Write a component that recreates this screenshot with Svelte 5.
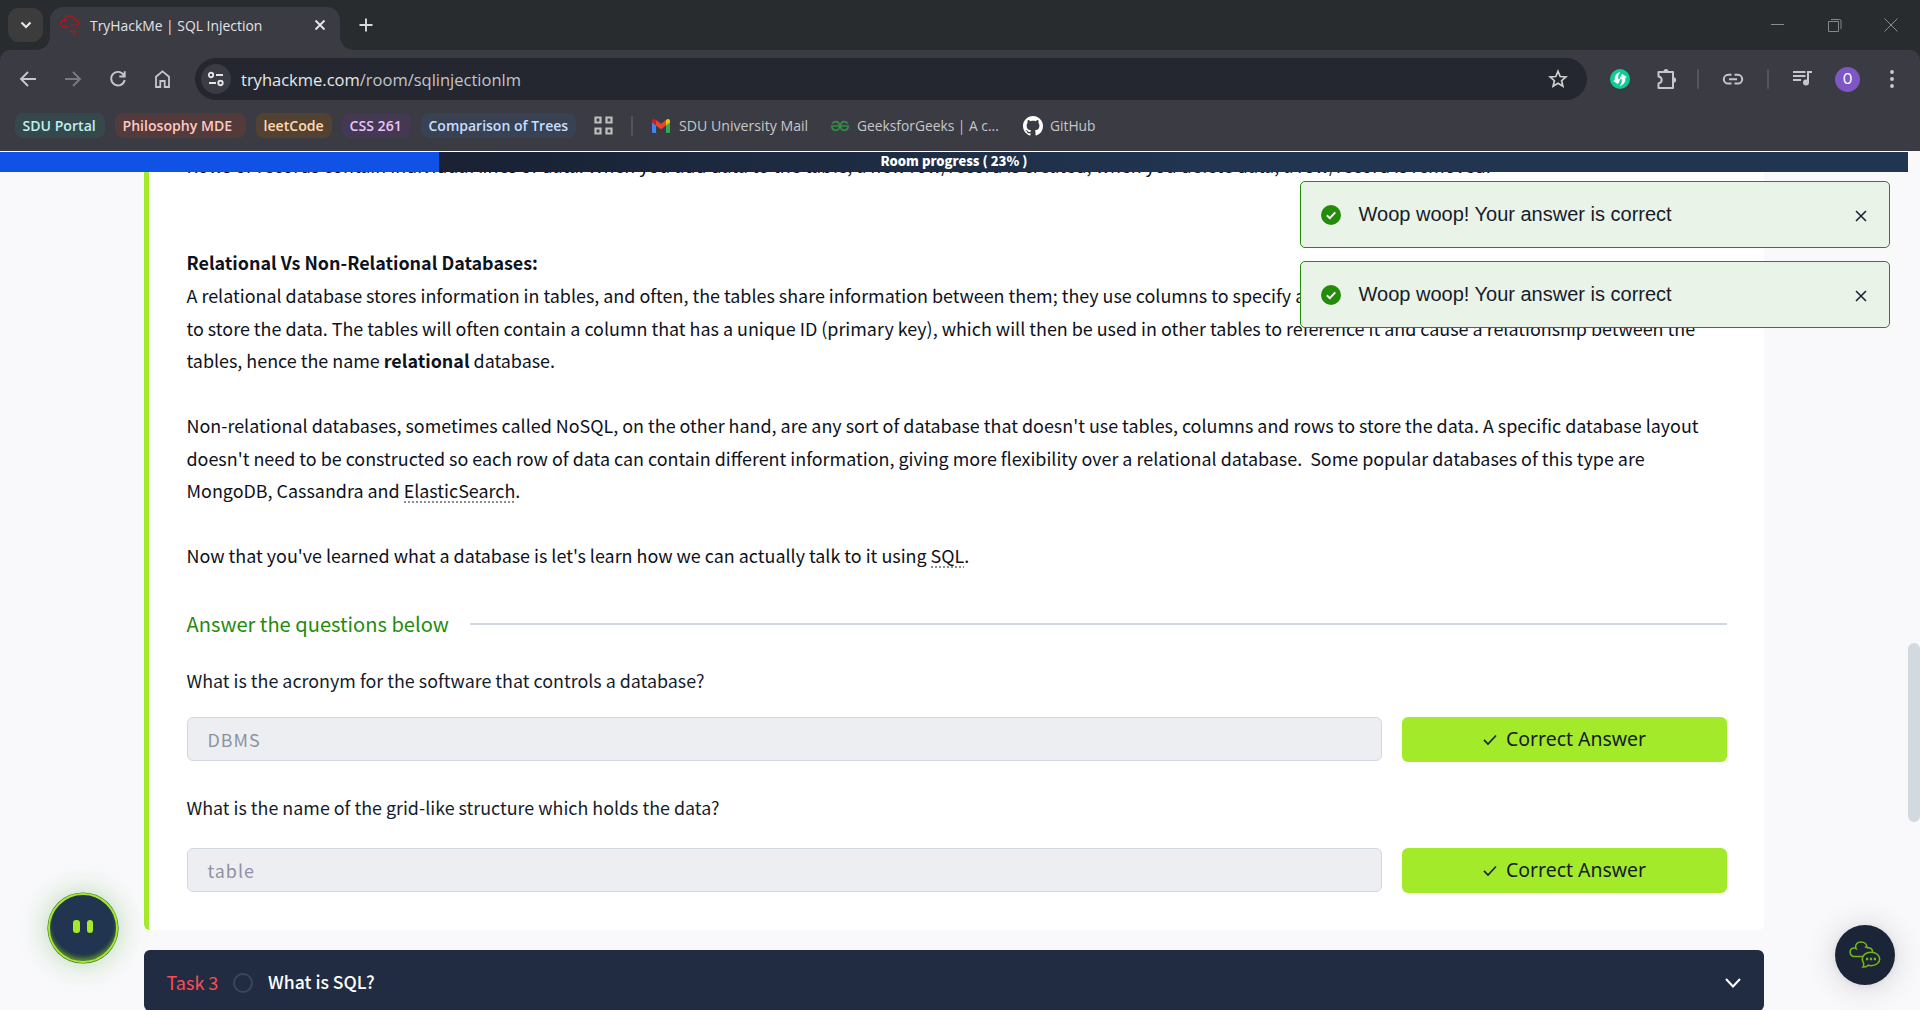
<script>
  const groups = [
    { name: 'SDU Portal', tone: 'teal' },
    { name: 'Philosophy MDE', tone: 'red' },
    { name: 'leetCode', tone: 'orange' },
    { name: 'CSS 261', tone: 'purple' },
    { name: 'Comparison of Trees', tone: 'blue' },
  ];
  const toasts = ['Woop woop! Your answer is correct', 'Woop woop! Your answer is correct'];
  const questions = [
    { text: 'What is the acronym for the software that controls a database?', answer: 'DBMS' },
    { text: 'What is the name of the grid-like structure which holds the data?', answer: 'table' },
  ];
  const progress = 23;
</script>

<div class="window">
  <header class="browser">
    <div class="tabstrip">
      <button class="tab-search" aria-label="Search tabs">
        <svg width="12" height="8" viewBox="0 0 12 8"><path d="M1.5 1.5 6 6l4.500-4.500" fill="none" stroke="#e6e6e6" stroke-width="2.200" /></svg>
      </button>
      <div class="tab">
        <svg class="favicon" width="20" height="20" viewBox="0 0 20 20">
          <path d="M9 12H4.300C2 12 .800 10.400.800 8.600c0-2 1.600-3.500 3.700-3.400C5 2.700 7 .900 9.600.900c2.500 0 4.500 1.600 5 4 2.300 0 4.200 1.500 4.300 3.800M4.500 5.200c1 0 1.700.200 2.400.800" fill="none" stroke="#b3161b" stroke-width="1.400" />
          <path d="M11 9.800h3M15.500 9.800H19M10 16.500h6M13 19h3" stroke="#a31d23" stroke-width="1.300" />
          <path d="M11 12.800h2M14 12.800h4M12 14.600h5M17.500 17.500h2" stroke="#6d2a31" stroke-width="1.300" />
        </svg>
        <span class="tab-title">TryHackMe | SQL Injection</span>
        <svg class="tab-close" width="12" height="12" viewBox="0 0 12 12"><path d="m1.500 1.500 9 9m0-9-9 9" stroke="#e6e6e6" stroke-width="1.900" /></svg>
      </div>
      <svg class="new-tab" width="14" height="14" viewBox="0 0 14 14"><path d="M7 .500v13M.500 7h13" stroke="#dadada" stroke-width="1.900" /></svg>
      <div class="controls">
        <svg width="14" height="14" viewBox="0 0 14 14"><path d="M0 6.500h13" stroke="#8a8c8e" /></svg>
        <svg width="14" height="14" viewBox="0 0 14 14"><path d="M.500 3.500h10v10H.500zM3 1.500h8.500a1.500 1.500 0 0 1 1.500 1.500V11" fill="none" stroke="#858789" /></svg>
        <svg width="14" height="14" viewBox="0 0 14 14"><path d="m.500 .500 13 13m0-13-13 13" stroke="#8a8c8e" /></svg>
      </div>
    </div>

    <div class="chrome">
      <div class="toolbar">
        <nav class="nav">
          <svg viewBox="0 0 20 20"><path d="M18 10H3.500M10 3 3 10l7 7" fill="none" stroke="#c4c7cf" stroke-width="1.900" /></svg>
          <svg viewBox="0 0 20 20"><path d="M2 10h14.500M10 3l7 7-7 7" fill="none" stroke="#787a81" stroke-width="1.900" /></svg>
          <svg viewBox="0 0 20 20"><path d="M15.900 6.200A6.800 6.800 0 1 0 16.700 11M16.700 2.300v5.200h-5.400" fill="none" stroke="#c4c7cf" stroke-width="1.900" /></svg>
          <svg viewBox="0 0 20 20"><path d="M3 18V7.700L9.500 2.300 16 7.700V18h-4.300v-6H7.300v6z" fill="none" stroke="#c4c7cf" stroke-width="1.800" /></svg>
        </nav>
        <div class="omnibox">
          <span class="site-info">
            <svg width="18" height="16" viewBox="0 0 18 16"><g fill="none" stroke="#e3e3e6" stroke-width="1.900"><circle cx="4" cy="4" r="2.200" /><path d="M9 4h7M2 12h7" /><circle cx="13.500" cy="12" r="2.200" /></g></svg>
          </span>
          <span class="url">tryhackme.com<em>/room/sqlinjectionlm</em></span>
          <svg class="star" width="20" height="20" viewBox="0 0 20 20"><path d="m10 2.300 2.200 5.200 5.700.500-4.300 3.700 1.300 5.500-4.900-2.900-4.900 2.900 1.300-5.500L2.100 8l5.700-.500z" fill="none" stroke="#cfcfd2" stroke-width="1.700" /></svg>
        </div>
        <svg class="ext" width="20" height="20" viewBox="0 0 20 20"><circle cx="10" cy="10" r="10" fill="#0fcb95" /><path d="M9.800 3.600C6.300 4.300 4.200 8 5.300 11.200L3.700 12l4.200 2.700L10 10.200l-1.900.300C7.300 8 8 5.300 9.800 3.600zM10.200 16.400c3.500-.700 5.600-4.400 4.500-7.600l1.600-.800-4.200-2.700L10 9.800l1.900-.300c.800 2.500.100 5.200-1.700 6.900z" fill="#fff" stroke="#fff" stroke-width=".7" /></svg>
        <svg class="puzzle" width="24" height="24" viewBox="0 0 24 24"><path d="M3.500 5H18v16H3.500v-4.600c4.200-.700 4.200-6.100 0-6.800z" fill="none" stroke="#c4c7cf" stroke-width="2" stroke-linejoin="round" /><path d="M8.500 4.500a2.500 2.500 0 0 1 5 0zM18.500 10.300a2.600 2.600 0 0 1 0 5.200z" fill="#c4c7cf" /></svg>
        <i class="bar bar-a"></i>
        <svg class="link" width="24" height="24" viewBox="0 0 24 24"><path d="M10.500 7.800H7.200a4.400 4.400 0 0 0 0 8.800h3.300M13.500 7.800h3.300a4.400 4.400 0 0 1 0 8.800h-3.300M8 12.200h8" fill="none" stroke="#c4c7cf" stroke-width="2" /></svg>
        <i class="bar bar-b"></i>
        <svg class="music" width="24" height="24" viewBox="0 0 24 24"><path d="M2 5h12.500M2 9h12.500M2 13h8" stroke="#c4c7cf" stroke-width="1.900" /><path d="M17 15.500V5h4" fill="none" stroke="#c4c7cf" stroke-width="2" /><circle cx="15" cy="15.500" r="3" fill="#c4c7cf" /></svg>
        <span class="avatar">O</span>
        <svg class="dots" width="6" height="20" viewBox="0 0 6 20" fill="#c9ccd3"><circle cx="3" cy="3" r="1.900" /><circle cx="3" cy="10" r="1.900" /><circle cx="3" cy="17" r="1.900" /></svg>
      </div>

      <div class="bookmarks">
        {#each groups as g}
          <span class="chip {g.tone}">{g.name}</span>
        {/each}
        <svg class="apps" width="19" height="19" viewBox="0 0 19 19"><path d="M1.500 1.500h5v5h-5zM12.500 1.500h5v5h-5zM1.500 12.500h5v5h-5zM12.500 12.500h5v5h-5z" fill="none" stroke="#c0bfbd" stroke-width="2.200" /></svg>
        <i class="bar bar-c"></i>
        <span class="mark mail">
          <svg width="18" height="14" viewBox="0 0 18 14"><path d="M0 2.500 4 5.500V14H1.300A1.300 1.300 0 0 1 0 12.700z" fill="#4285f4" /><path d="M18 2.500 14 5.500V14h2.700a1.300 1.300 0 0 0 1.300-1.300z" fill="#34a853" /><path d="M4 1 9 4.800 14 1v5.500l-5 3.800-5-3.800z" fill="#ea4335" /><path d="M0 3V2C0 .200 1.800-.600 3.300.400L4 1v5.500L0 3.500z" fill="#c5221f" /><path d="M18 3V2c0-1.800-1.800-2.600-3.300-1.600L14 1v5.500l4-3z" fill="#fbbc04" /></svg>
          SDU University Mail
        </span>
        <span class="mark geeks">
          <svg width="18" height="12" viewBox="0 0 18 12"><path d="M1.300 3.600C2.200 2.200 3.500 1.700 4.700 1.700c2.200 0 3.700 1.800 3.700 4.300s-1.500 4.300-3.700 4.300C2.500 10.300.900 8.800.900 6.300M0 6h8.300M16.700 3.600c-.900-1.400-2.200-1.900-3.400-1.900C11.100 1.700 9.600 3.500 9.600 6s1.500 4.300 3.700 4.300c2.200 0 3.800-1.500 3.800-4M18 6H9.700" fill="none" stroke="#2f8d46" stroke-width="1.700" /></svg>
          GeeksforGeeks | A c...
        </span>
        <span class="mark">
          <svg width="20" height="20" viewBox="0 0 16 16"><path fill="#fff" d="M8 0C3.580 0 0 3.580 0 8c0 3.540 2.290 6.530 5.470 7.590.4.070.55-.17.55-.38 0-.19-.01-.82-.01-1.490-2.010.37-2.530-.49-2.690-.94-.09-.23-.48-.94-.82-1.130-.28-.15-.68-.52-.01-.53.63-.01 1.080.58 1.230.82.72 1.210 1.870.87 2.330.66.07-.52.28-.87.51-1.070-1.780-.2-3.640-.89-3.640-3.950 0-.87.31-1.590.82-2.150-.08-.2-.36-1.020.08-2.120 0 0 .67-.21 2.200.82.64-.18 1.320-.27 2-.27s1.360.09 2 .27c1.530-1.040 2.200-.82 2.200-.82.44 1.100.16 1.920.08 2.120.51.56.82 1.270.82 2.150 0 3.070-1.870 3.750-3.650 3.950.29.25.54.73.54 1.480 0 1.070-.01 1.930-.01 2.200 0 .21.15.46.55.38A8.010 8.010 0 0 0 16 8c0-4.420-3.580-8-8-8z" /></svg>
          GitHub
        </span>
      </div>
    </div>
  </header>

  <main class="page">
    <section class="card">
      <div class="prose">
        <p>Rows or records contain individual lines of data. When you add data to the table, a new row/record is created, when you delete data, a row/record is removed.</p>
        <p class="section">
          <b>Relational Vs Non-Relational Databases:</b><br />
          A relational database stores information in tables, and often, the tables share information between them; they use columns to specify and define the data being stored and rows<br />
          to store the data. The tables will often contain a column that has a unique ID (primary key), which will then be used in other tables to reference it and cause a relationship between the<br />
          tables, hence the name <b>relational</b> database.
        </p>
        <p>
          Non-relational databases, sometimes called NoSQL, on the other hand, are any sort of database that doesn't use tables, columns and rows to store the data. A specific database layout<br />
          doesn't need to be constructed so each row of data can contain different information, giving more flexibility over a relational database.&nbsp; Some popular databases of this type are<br />
          MongoDB, Cassandra and <span class="term">ElasticSearch</span>.
        </p>
        <p>Now that you've learned what a database is let's learn how we can actually talk to it using <span class="term">SQL</span>.</p>
      </div>

      <h2>Answer the questions below</h2>

      {#each questions as q}
        <div class="question">
          <p>{q.text}</p>
          <div class="answer">
            <div class="field">{q.answer}</div>
            <button class="correct">
              <svg width="14" height="12" viewBox="0 0 14 12"><path d="m1 5.800 4 4.200 8-8.500" fill="none" stroke="#1c2538" stroke-width="1.700" /></svg>
              Correct Answer
            </button>
          </div>
        </div>
      {/each}
    </section>

    <section class="task">
      <span class="task-no">Task 3</span>
      <i class="ring"></i>
      <span class="task-name">What is SQL?</span>
      <svg class="chevron" width="16" height="10" viewBox="0 0 16 10"><path d="m1 1 7 7.500L15 1" fill="none" stroke="#fff" stroke-width="2" /></svg>
    </section>

    <div class="progress">
      <div class="fill" style="width: {progress}%"></div>
      <span>Room progress ( {progress}% )</span>
    </div>

    <div class="toasts">
      {#each toasts as t}
        <div class="toast">
          <svg width="20" height="20" viewBox="0 0 20 20"><circle cx="10" cy="10" r="10" fill="#248b0c" /><path d="m5.800 10.300 3 2.800 5.500-5.800" fill="none" stroke="#fff" stroke-width="1.900" /></svg>
          <span>{t}</span>
          <svg class="dismiss" width="12" height="12" viewBox="0 0 12 12"><path d="m1 1 10 10m0-10L1 11" stroke="#1c2538" stroke-width="1.600" /></svg>
        </div>
      {/each}
    </div>

    <div class="robot"><i></i><i></i></div>

    <div class="chat">
      <svg width="32" height="28" viewBox="0 0 32 28" fill="none" stroke="#74b816" stroke-width="1.500">
        <path d="M13.500 15.500H5.500a4.300 4.300 0 0 1-1-8.500c.800-.200 1.800 0 2.600.500C5.500 3.500 8.500 1 12 1s6 2.300 6 5.500c-.500-.400-1.500-.500-2.200-.100M18 6.800c3-.600 5.300 1 5.700 4" />
        <path d="M14 26c1-1 1-2.500.500-4a6.700 6.700 0 0 1-1.200-4c0-4 3.800-6.700 8.700-6.700s8.700 2.900 8.700 6.700-3.800 6.700-8.700 6.700c-1 0-2-.100-2.800-.400-1.600 1.200-3 1.800-5.200 1.700z" />
        <path d="M17 18h2.200M20.900 18h2.200M24.800 18H27" stroke-width="2.400" />
      </svg>
    </div>

    <i class="scrollbar"></i>
  </main>
</div>

<style>
  :global(body) { margin: 0; overflow: hidden; }
  .window { width: 1920px; height: 1010px; overflow: hidden; display: flex; flex-direction: column; background: #f9f9fb; font-family: 'Open Sans', 'Noto Sans', sans-serif; }
  svg { flex: none; display: block; }
  button { border: 0; padding: 0; font: inherit; }
  p, h2 { margin: 0; }

  .browser { height: 151px; flex: none; background: #292c2f; }
  .tabstrip { height: 50px; display: flex; align-items: center; padding-left: 8px; box-sizing: border-box; }
  .tab-search { width: 35px; height: 34px; border-radius: 11px; background: #3d3c3d; display: flex; align-items: center; justify-content: center; }
  .tab { position: relative; align-self: flex-end; width: 290px; height: 43px; margin-left: 7px; box-sizing: border-box; border-radius: 13px 13px 0 0; background: #3a3b43; display: flex; align-items: center; padding: 0 14px 7px 10px; }
  .tab::before, .tab::after { content: ''; position: absolute; bottom: 0; width: 13px; height: 13px; }
  .tab::before { left: -13px; background: radial-gradient(circle at 0 0, transparent 12.5px, #3a3b43 13px); }
  .tab::after { right: -13px; background: radial-gradient(circle at 100% 0, transparent 12.5px, #3a3b43 13px); }
  .tab-title { flex: 1; margin-left: 10px; font-size: 13.9px; color: #e3e3e6; }
  .new-tab { margin-left: 19px; }
  .controls { margin-left: auto; display: flex; gap: 42.500px; padding-right: 22px; }

  .chrome { height: 101px; background: #3a3b43; border-radius: 10px 10px 0 0; }
  .toolbar { height: 58px; display: flex; align-items: center; }
  .nav { display: flex; gap: 25px; padding-left: 17.5px; width: 177.5px; }
  .nav svg { width: 20px; height: 20px; }
  .omnibox { width: 1392px; height: 42px; box-sizing: border-box; border-radius: 21px; background: #24272f; display: flex; align-items: center; padding: 0 19.500px 0 6px; }
  .site-info { width: 30px; height: 30px; border-radius: 50%; background: #3a3b43; display: flex; align-items: center; justify-content: center; }
  .url { flex: 1; margin-left: 10px; font-size: 16.5px; color: #e8e8ea; }
  .url em { font-style: normal; color: #c3c5ca; }
  .ext { margin-left: 23px; }
  .puzzle { margin-left: 24.500px; }
  .bar { flex: none; width: 2px; height: 20px; background: #53545d; border-radius: 1px; }
  .bar-a { margin-left: 18.500px; }
  .link { margin-left: 21.500px; }
  .bar-b { margin-left: 22px; }
  .music { margin-left: 22.500px; }
  .avatar { width: 25px; height: 25px; margin-left: 20px; border-radius: 50%; background: #7e57c2; color: #fff; font: 14px/25px Roboto, sans-serif; text-align: center; }
  .dots { margin-left: 29px; }

  .bookmarks { height: 35px; display: flex; align-items: center; padding-left: 15px; }
  .chip { flex: none; height: 25px; margin-right: 10px; padding-left: 7.500px; box-sizing: border-box; border-radius: 8px; font-size: 14.1px; line-height: 25px; font-weight: 600; white-space: nowrap; }
  .teal { width: 90px; background: #35494c; color: #bdf1ee; }
  .red { width: 131px; background: #533a3b; color: #ffc9c3; }
  .orange { width: 76px; background: #534232; color: #ffd9b0; }
  .purple { width: 69px; background: #453853; color: #e6c5ff; }
  .blue { width: 155px; background: #384253; color: #c9deff; font-size: 14px; }
  .apps { margin-left: 8px; }
  .bar-c { margin-left: 18px; }
  .mark { display: flex; align-items: center; gap: 7px; font-size: 13.8px; color: #c7c7c9; white-space: nowrap; }
  .mark.mail { width: 179px; margin-left: 19px; gap: 9px; font-size: 14.15px; }
  .mark.geeks { width: 192px; gap: 8px; }

  .page { position: relative; flex: 1; padding: 1px 156px 0 144px; overflow: hidden; background: #f9f9fb; font-family: 'Noto Sans CJK SC', 'Noto Sans', sans-serif; color: #151c2b; }
  .card { height: 778px; box-sizing: border-box; padding: 0 37px 0 37.500px; border-left: 5px solid #a3ea2a; border-radius: 0 0 6px 6px; background: #fff; overflow: hidden; }
  .prose { margin-top: -3.300px; font-size: 17.91px; line-height: 32.56px; white-space: nowrap; color: #0e121c; }
  .prose p { margin-bottom: 32.56px; }
  .prose p.section { margin-top: 65.12px; }
  .prose p:last-child { margin-bottom: 0; }
  .term { background: repeating-linear-gradient(90deg, #8b8e95 0 2px, transparent 2px 4px) 0 100% / 100% 2px no-repeat; padding-bottom: 0; }
  h2 { display: flex; align-items: center; height: 32px; margin-top: 36px; font-size: 20.1px; line-height: 32px; font-weight: 400; color: #248b0c; white-space: nowrap; }
  h2::after { content: ''; flex: 1; height: 2px; margin: 0 0 0 21px; background: #d2d8df; }
  .question { margin-top: 29px; font-size: 17.89px; }
  h2 + .question { margin-top: 24.300px; }
  .question p { line-height: 32px; }
  .answer { display: flex; align-items: flex-start; gap: 20px; margin-top: 21px; }
  .question:last-child .answer { margin-top: 25px; }
  .field { flex: 1; height: 44px; box-sizing: border-box; padding-left: 20px; border: 1px solid #d2d8df; border-radius: 6px; background: #edeef2; color: #8b93a3; line-height: 42px; letter-spacing: 1px; }
  .correct { width: 325px; height: 45px; border-radius: 6px; background: #a3ea2a; color: #151c2b; display: flex; align-items: center; justify-content: center; gap: 9px; box-sizing: border-box; padding-bottom: 2px; font: 19.45px 'Noto Sans', sans-serif; }
  .correct svg { margin-top: 2px; }

  .task { display: flex; align-items: center; height: 61px; box-sizing: border-box; margin-top: 20px; padding: 2px 23.500px 0 22.500px; border-radius: 6px; background: #212c42; font-size: 17.6px; font-weight: 500; }
  .task-no { width: 66.500px; color: #fa4d56; font-weight: 400; font-size: 18px; }
  .ring { width: 20px; height: 20px; margin-top: 2px; box-sizing: border-box; border: 2px solid #3b465a; border-radius: 50%; }
  .task-name { flex: 1; margin-left: 15px; color: #fff; }
  .chevron { margin-top: 2px; }

  .progress { position: absolute; top: 1px; left: 0; width: 1908px; height: 20px; background: linear-gradient(90deg, #192132 23%, #213450 62%); box-shadow: 0 -1px 0 #fff; }
  .fill { height: 20px; background: #1152e6; }
  .progress span { position: absolute; inset: 0; text-align: center; font-size: 13px; line-height: 18px; font-weight: 900; color: #fff; }

  .toasts { position: absolute; top: 30px; right: 30px; width: 590px; display: grid; gap: 13px; }
  .toast { height: 67px; box-sizing: border-box; display: flex; align-items: center; padding: 0 22px 0 20px; border: 1px solid #248b0c; border-radius: 5px; background: #e9f3e7; }
  .toast span { flex: 1; margin: -2px 0 0 17.500px; font: 20px/24px 'Liberation Sans', sans-serif; }
  .toast .dismiss { margin-top: 3px; }

  .robot { position: absolute; left: 48px; top: 742px; width: 70px; height: 70px; box-sizing: border-box; border: 2.500px solid #a3ea2a; border-radius: 50%; background: #213450; box-shadow: 0 0 0 .6px #3f6d3c, 0 0 30px rgba(36, 139, 12, .32), inset 0 -4px 4px -1px rgba(120, 180, 30, .7); display: flex; gap: 7px; justify-content: center; padding-top: 25px; }
  .robot i { width: 6.500px; height: 13px; border-radius: 3px; background: #a3ea2a; }
  .chat { position: absolute; left: 1835px; top: 774px; width: 60px; height: 60px; border-radius: 50%; background: #1c2538; box-shadow: 0 2px 32px rgba(0, 0, 0, .16), 0 1px 6px rgba(0, 0, 0, .06); display: flex; align-items: center; justify-content: center; }
  .scrollbar { position: absolute; right: 0; top: 492px; width: 12px; height: 179px; border-radius: 6px; background: #d2d9df; }
</style>
